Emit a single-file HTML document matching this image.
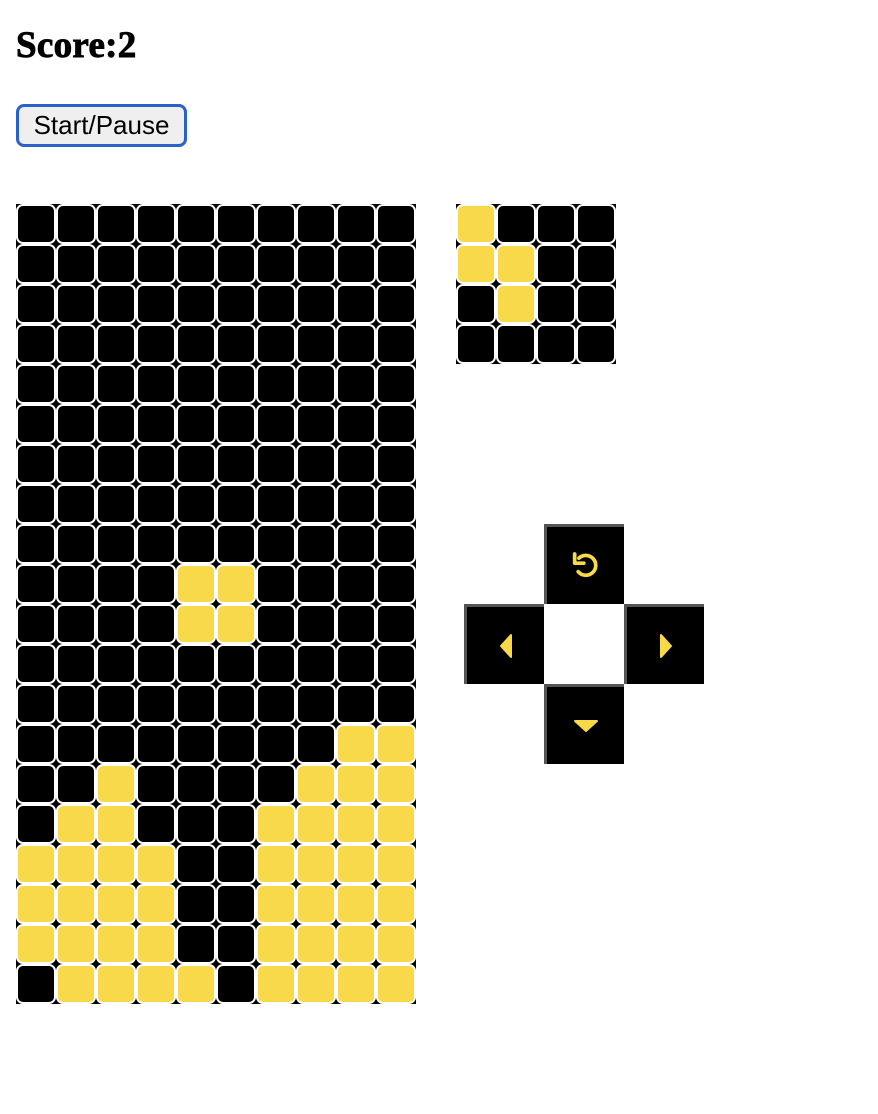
<!DOCTYPE html>
<html><head><meta charset="utf-8"><style>
body{margin:0;background:#fff;width:878px;height:1114px;position:relative;overflow:hidden}
h2{position:absolute;left:16px;top:24px;margin:0;font-family:"Liberation Serif",serif;font-size:37px;font-weight:700;-webkit-text-stroke:0.9px #000;letter-spacing:0.3px}
button{position:absolute;left:16px;top:104px;width:171px;height:43px;box-sizing:border-box;border:3px solid #2a62c9;border-radius:8px;background:#efefef;font-family:"Liberation Sans",sans-serif;font-size:26px;color:#000;padding:0;white-space:nowrap}
.grid{position:absolute;background:#000;display:grid}
.c{width:40px;height:40px;box-sizing:border-box;border:2px solid #fff;border-radius:7px;background:#000}
.y{background:#f8d94a}
.b{position:absolute;width:80px;height:80px;box-sizing:border-box;background:#000;border-style:solid;border-width:3px 0 0 3px;border-color:#555;display:flex;align-items:center;justify-content:center}
</style></head><body>
<h2>Score:2</h2>
<button>Start/Pause</button>
<div class="grid" id="g" style="left:16px;top:204px;grid-template-columns:repeat(10,40px)"></div>
<div class="grid" id="p" style="left:456px;top:204px;grid-template-columns:repeat(4,40px)"></div>
<div class="b" style="left:544px;top:524px"><svg width="34" height="34" viewBox="0 0 24 24"><path d="M7 6.5A7 7 0 1 1 6.5 16" fill="none" stroke="#f8d94a" stroke-width="2.6" stroke-linecap="round"/><path d="M4 3.5V10H10.5" fill="none" stroke="#f8d94a" stroke-width="2.6" stroke-linecap="round" stroke-linejoin="round"/></svg></div>
<div class="b" style="left:464px;top:604px"><svg width="14" height="26" viewBox="0 0 14 26"><path d="M12 2V24L2 13Z" fill="#f8d94a" stroke="#f8d94a" stroke-linejoin="round" stroke-width="2"/></svg></div>
<div class="b" style="left:624px;top:604px"><svg width="14" height="26" viewBox="0 0 14 26"><path d="M2 2V24L12 13Z" fill="#f8d94a" stroke="#f8d94a" stroke-linejoin="round" stroke-width="2"/></svg></div>
<div class="b" style="left:544px;top:684px"><svg width="26" height="14" viewBox="0 0 26 14"><path d="M2 2H24L13 12Z" fill="#f8d94a" stroke="#f8d94a" stroke-linejoin="round" stroke-width="2"/></svg></div>
<script>
var rows=[
"0000000000","0000000000","0000000000","0000000000","0000000000",
"0000000000","0000000000","0000000000","0000000000","0000110000",
"0000110000","0000000000","0000000000","0000000011","0010000111",
"0110001111","1111001111","1111001111","1111001111","0111101111"];
var g=document.getElementById('g'),h='';
rows.forEach(function(r){for(var i=0;i<10;i++)h+='<div class="c'+(r[i]=='1'?' y':'')+'"></div>';});
g.innerHTML=h;
var pr=["1000","1100","0100","0000"];h='';
pr.forEach(function(r){for(var i=0;i<4;i++)h+='<div class="c'+(r[i]=='1'?' y':'')+'"></div>';});
document.getElementById('p').innerHTML=h;
</script>
</body></html>
